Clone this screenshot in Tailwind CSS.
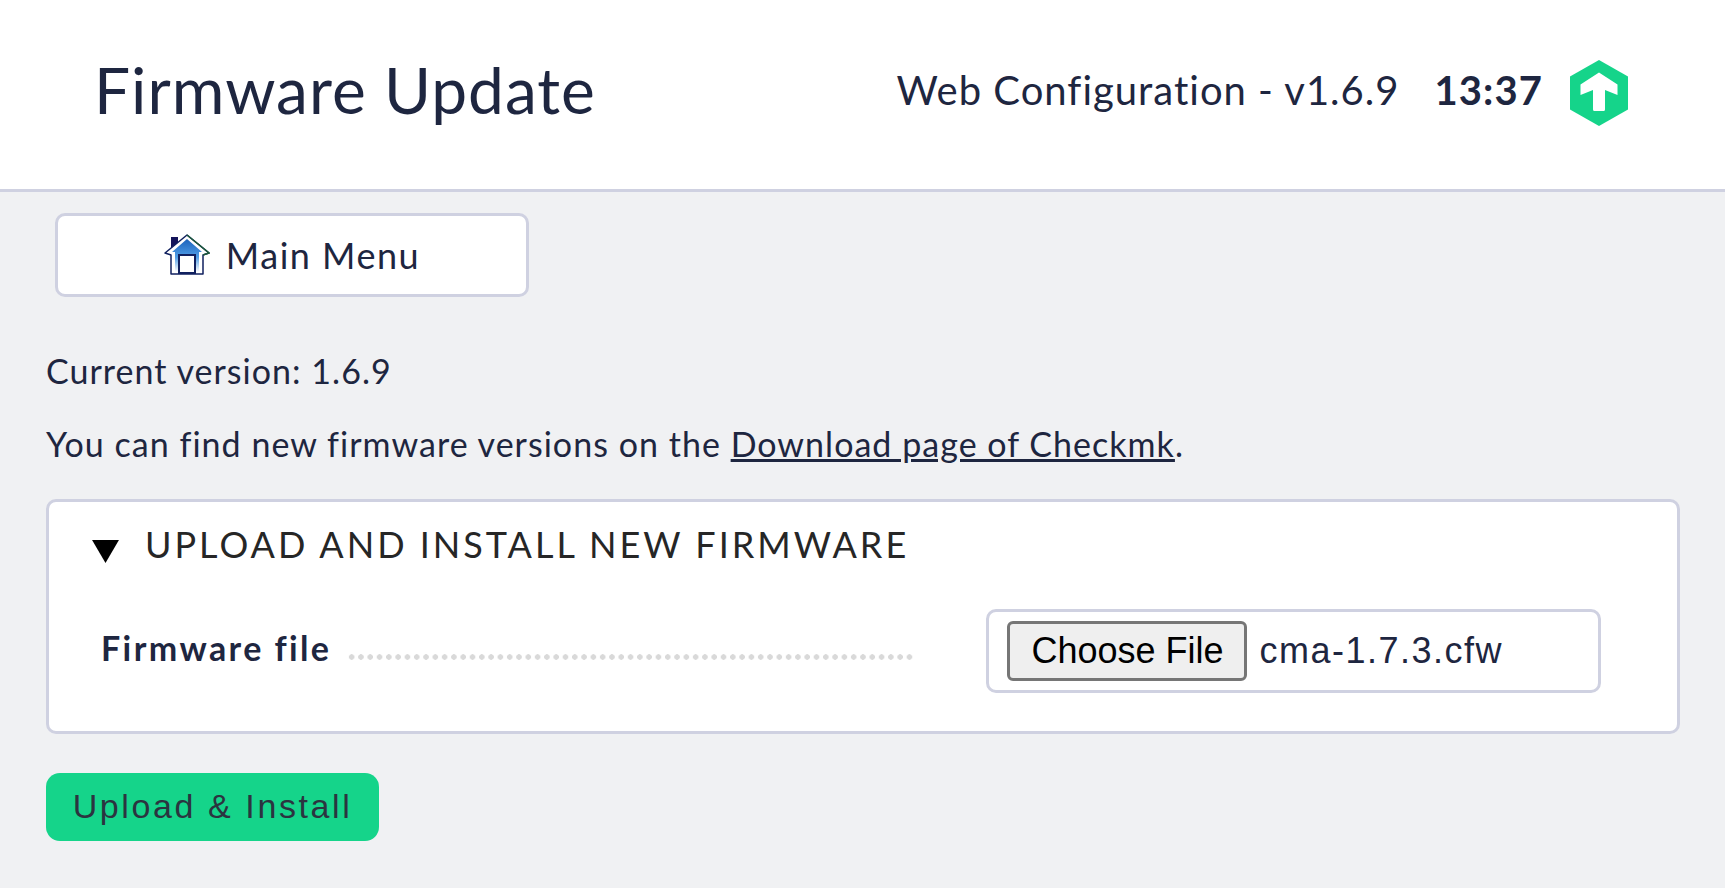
<!DOCTYPE html>
<html lang="en">
<head>
  <meta charset="UTF-8" />
  <title>Firmware Update</title>
  <script src="https://cdn.jsdelivr.net/npm/@tailwindcss/browser@4"></script>
</head>
<body class="bg-[#f0f1f3] font-['Lato',sans-serif] text-[#1e2640] h-[888px] overflow-hidden">
  <!-- Header -->
  <header class="h-[192px] bg-white border-b-[3px] border-[#cfd1e1] flex items-center pl-[94px] pr-[97px] pb-[9px]">
    <h1 class="text-[64px] leading-none tracking-[1px] font-normal">Firmware Update</h1>
    <div class="ml-auto flex items-center">
      <span class="text-[40px] tracking-[1px]">Web Configuration - v1.6.9</span>
      <span class="ml-[35px] text-[40px] font-bold tracking-[1.1px]">13:37</span>
      <svg class="ml-[27px] mt-[6px] w-[58px] h-[66px]" viewBox="0 0 58 66">
        <path d="M29 0 L58 16.500 V49.500 L29 66 L0 49.500 V16.500 Z" fill="#15d48a"/>
        <path d="M29 12.500 L47.500 24.500 V35 L35 30 V49.500 Q35 51 33.500 51 H24.500 Q23 51 23 49.500 V30 L10.500 35 V24.500 Z" fill="#fff"/>
      </svg>
    </div>
  </header>

  <main class="pl-[46px] pr-[45px]">
    <a class="ml-[9px] mt-[21px] w-[474px] h-[84px] bg-white border-[3px] border-[#cfd1e1] rounded-[10px] flex items-center justify-center text-[36px] tracking-[1.5px]">
      <svg class="w-[46px] h-[42px] mr-[16px]" viewBox="0 0 46 42">
        <defs>
          <linearGradient id="roof" x1="0" y1="0" x2="0" y2="1">
            <stop offset="0" stop-color="#1c62bb"/>
            <stop offset="0.55" stop-color="#4f9de6"/>
            <stop offset="1" stop-color="#ffffff"/>
          </linearGradient>
        </defs>
        <rect x="7" y="3" width="7" height="12" fill="#14145a"/>
        <path d="M23 1 L45 19 L39 21 V40 H7 V21 L1 19 Z" fill="#fff" stroke="#10205f" stroke-width="1.500" stroke-linejoin="round"/>
        <path d="M23 1 L45 19 L39 21" fill="none" stroke="#1d5a3c" stroke-width="1.500"/>
        <path d="M23 5 L38 18 H35 V38 H11 V18 H8 Z" fill="url(#roof)"/>
        <path d="M15 39 V21 H31 V39 Z" fill="#fff" stroke="#10205f" stroke-width="2"/>
      </svg>
      Main Menu
    </a>

    <p class="mt-[54px] text-[34px] leading-[40px] tracking-[1.03px]">Current version: 1.6.9</p>
    <p class="mt-[33px] text-[34px] leading-[40px] tracking-[1.03px]">You can find new firmware versions on the <a class="underline">Download page of Checkmk</a>.</p>

    <!-- Upload box -->
    <section class="mt-[35px] h-[235px] bg-white border-[3px] border-[#cfd1e1] rounded-[10px] pl-[43px]">
      <div class="flex items-center pt-[20px]">
        <svg class="w-[27px] h-[24px] mt-[14px]" viewBox="0 0 28 25"><path d="M0 1 H28 L14 25 Z" fill="#000"/></svg>
        <h2 class="ml-[26px] text-[36px] leading-[44px] tracking-[3px] font-normal text-[#262626]">UPLOAD AND INSTALL NEW FIRMWARE</h2>
      </div>
      <div class="flex items-center mt-[42px]">
        <span class="ml-[9px] mb-[6px] text-[34px] leading-[40px] font-bold tracking-[2.4px]">Firmware file</span>
        <span class="ml-[16px] mt-[13px] w-[568px] h-[6px] bg-[radial-gradient(circle,#d9d9d9_2.5px,transparent_3px)] bg-[length:9.300px_6px]"></span>
        <div class="ml-[71px] mt-[1px] w-[615px] h-[84px] border-[3px] border-[#cfd1e1] rounded-[10px] flex items-center pl-[18px] font-['Liberation_Sans',sans-serif] text-[36px]">
          <button class="w-[240px] h-[60px] bg-[#efefef] border-[3px] border-[#767676] rounded-[6px] text-black">Choose File</button>
          <span class="ml-[12px] tracking-[1.5px]">cma-1.7.3.cfw</span>
        </div>
      </div>
    </section>

    <button class="mt-[39px] w-[333px] h-[68px] pb-[2px] bg-[#15d48a] rounded-[14px] font-['Liberation_Sans',sans-serif] text-[34px] tracking-[2.6px] text-[#2b3440]">Upload &amp; Install</button>
  </main>
</body>
</html>
